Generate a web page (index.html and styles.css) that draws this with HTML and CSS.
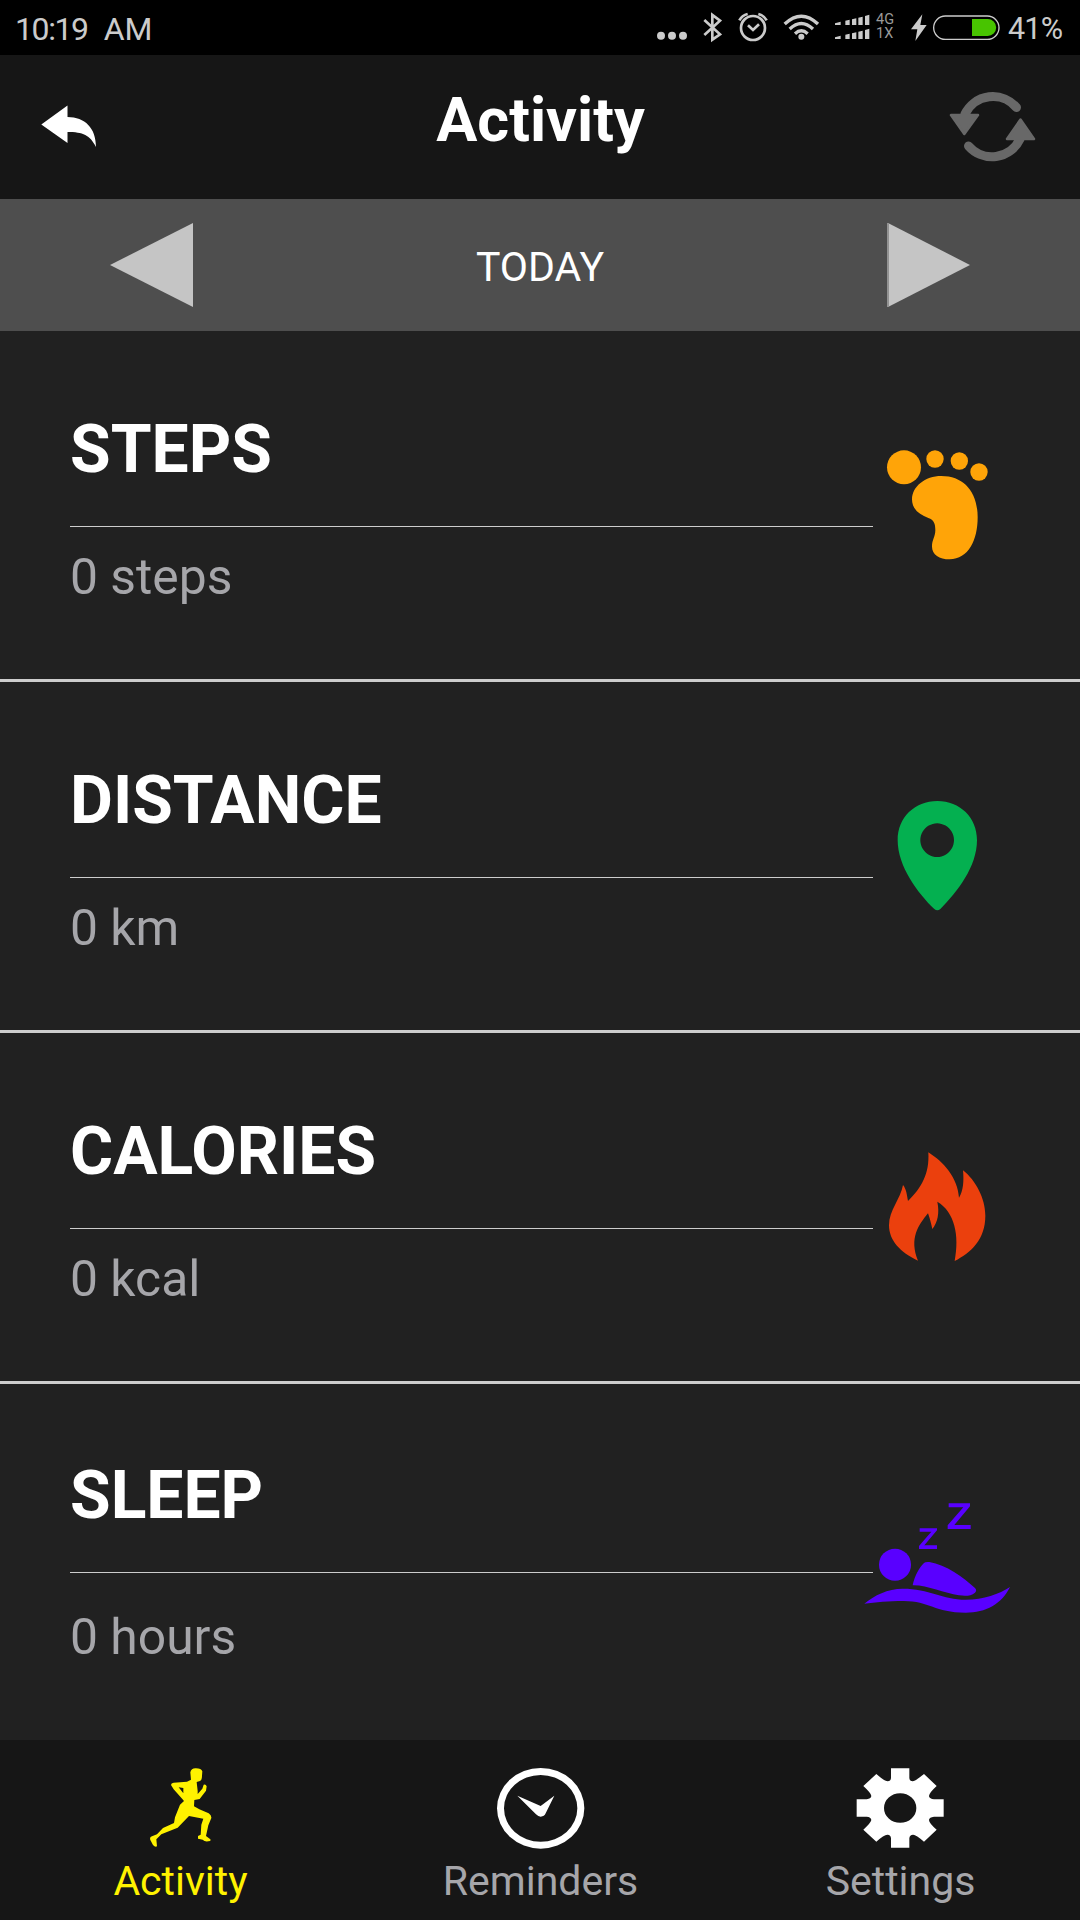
FILE: index.html
```html
<!DOCTYPE html>
<html lang="en">
<head>
<meta charset="utf-8">
<title>Activity</title>
<link rel="stylesheet" href="styles.css">
</head>
<body>
<div class="status">
  <div class="clock"><span>10:19</span><span>AM</span></div>
  <div class="tray">
    <svg width="39" height="55" viewBox="48 0 117 165"><circle cx="63" cy="107" r="12"/><circle cx="96" cy="107" r="12"/><circle cx="129" cy="107" r="12"/></svg>
    <svg width="35" height="55" viewBox="165 0 105 165"><path class="line" d="M193 60 240 103 217 119V45L240 62 193 105" stroke-width="8"/></svg>
    <svg width="46" height="55" viewBox="270 0 138 165"><g class="line"><circle cx="339" cy="84" r="36" stroke-width="8"/><path d="M324 76 339 90 357 73" stroke-width="8"/><path d="M298 61Q306 46 323 42M355 42Q372 46 380 61" stroke-width="8"/></g></svg>
    <svg width="51" height="55" viewBox="408 0 153 165"><g class="line" stroke-width="10"><path d="M434 72Q484 25 534 72M449 87Q484 54 519 87M465 101Q484 84 503 101"/></g><circle cx="484" cy="110" r="9"/></svg>
    <svg width="46" height="55" viewBox="561 0 138 165"><path d="M585 70 602 65V75H585ZM616 62 629 59V75H616ZM636 58 649 55V75H636ZM655 53 668 50V75H655ZM675 48 688 44V75H675Z"/><path d="M585 112 602 107V117H585ZM616 104 629 101V117H616ZM636 100 649 97V117H636ZM655 95 668 92V117H655ZM675 90 688 86V117H675Z"/></svg>
    <div class="network"><span>4G</span><span>1X</span></div>
    <svg width="23" height="55" viewBox="801 0 69 165"><path d="M847 43 813 88H832L826 123 860 75H841Z"/></svg>
    <svg width="74" height="55" viewBox="870 0 222 165"><rect class="line" x="881" y="48" width="196" height="70" rx="35" stroke-width="4"/><path class="charge" d="M996 57H1043A25.500 25.500 0 0 1 1043 108H996Z"/></svg>
    <span class="percent">41%</span>
  </div>
</div>

<header class="header">
  <svg class="back" width="60" height="46" viewBox="40 103 60 46"><path d="M41.300 124.500 67.500 105.500V117C85 117 96 128 96 147C90 135 83 132 67.500 132V143Z"/></svg>
  <h1>Activity</h1>
  <svg class="sync" width="90" height="72" viewBox="948 90 90 72"><path class="ring" d="M965 114A31 31 0 0 1 1016.500 107.500M968.500 146A31 31 0 0 0 1020 139"/><path class="heads" d="M951 115H978L964.300 134ZM1020.500 119.500 1034 139H1007Z"/></svg>
</header>

<div class="datebar">
  <svg width="83" height="84" viewBox="0 0 83 84"><path d="M0 42 83 0V84Z"/></svg>
  <span>TODAY</span>
  <svg width="83" height="84" viewBox="0 0 83 84"><path d="M1 0 83 42 1 84Z"/><path class="edge" d="M0 0H2V84H0Z"/></svg>
</div>

<main>
  <section class="row steps">
    <div class="info"><h2>STEPS</h2><p>0 steps</p></div>
    <svg width="150" height="150" viewBox="0 0 450 450"><circle cx="132" cy="112" r="51"/><circle cx="225" cy="87" r="26"/><circle cx="298" cy="93" r="26"/><circle cx="357" cy="126" r="26"/><path d="M244 138C195 138 156 170 156 208C156 237 177 253 205 264C222 270 226 281 226 301C226 320 216 330 216 350C216 373 238 388 269 388C325 388 353 330 353 262C353 186 312 138 244 138Z"/></svg>
  </section>
  <section class="row distance">
    <div class="info"><h2>DISTANCE</h2><p>0 km</p></div>
    <svg width="140" height="150" viewBox="0 0 420 450"><path fill-rule="evenodd" d="M202 63C134 63 83 113 83 180C83 260 144 340 193 387Q202 395 211 387C262 336 321 260 321 180C321 113 270 63 202 63ZM201.500 130A50.500 50.500 0 1 1 201.400 130Z"/></svg>
  </section>
  <section class="row calories">
    <div class="info"><h2>CALORIES</h2><p>0 kcal</p></div>
    <svg width="150" height="150" viewBox="0 0 450 450"><path d="M205 67C251 96 293 143 297 203C310 183 312 153 309 121C347 151 376 205 376 257C376 328 334 367 284 393C299 316 284 246 232 215C239 249 233 277 217 297C213 280 210 266 204 250C175 286 147 325 174 392C120 367 87 331 87 286C87 240 122 207 129 165C139 177 141 196 144 213C184 174 209 132 205 67Z"/></svg>
  </section>
  <section class="row sleep">
    <div class="info"><h2>SLEEP</h2><p>0 hours</p></div>
    <svg width="180" height="150" viewBox="0 0 540 450"><circle cx="135" cy="254" r="48"/><path d="M188 316C194 286 209 261 222 249Q226 245 238 246C288 254 340 292 375 324Q382 331 375 338C363 348 347 349 327 346C282 340 232 315 188 316ZM43 371C73 346 113 326 158 326C238 326 277 359 347 359C401 359 448 342 480 321C455 372 408 398 347 398C252 398 238 362 158 363C118 363 76 367 43 371Z"/><path d="M209 145H261V151L223 196H261V207H207V198L244 155H209ZM296 70H360V79L313 135H362V147H293V136L340 82H296Z"/></svg>
  </section>
</main>

<nav class="tabs">
  <a class="tab active">
    <svg width="120" height="96" viewBox="120 90 360 288"><path fill-rule="evenodd" d="M331 127Q334 114 348 115Q364 115 367 124L366 138Q366 151 360 153L350 156L353 183V192L367 176L371 164Q377 161 380 169L378 182L359 207L343 210L342 229L358 238L386 250Q395 256 394 264L385 286L378 318L391 328Q394 334 385 334Q374 336 368 329L354 326V318L362 314L364 284L370 266L327 258L293 293L244 313L229 328L231 349Q225 352 219 345L211 330Q208 320 216 319L231 313L249 294L282 279L285 262L300 224L312 213L307 207L281 178L273 165Q273 159 281 158L321 155L333 149ZM296 172 310 190V174Z"/></svg>
    <span>Activity</span>
  </a>
  <a class="tab">
    <svg width="120" height="96" viewBox="180 90 360 288"><path fill-rule="evenodd" d="M231 235A131 121 0 1 1 493 235A131 121 0 1 1 231 235ZM252 235A110 100 0 1 0 472 235A110 100 0 1 0 252 235Z"/><path d="M292 197 362 228 403 197 377 250Q373 260 362 260Q355 260 348 253Z"/></svg>
    <span>Reminders</span>
  </a>
  <a class="tab">
    <svg width="120" height="96" viewBox="120 90 360 288"><path fill-rule="evenodd" d="M273 115H328V144Q329 154 338 154Q346 153 372 132L410 168Q386 190 387 199Q389 207 402 208H431V260H402Q388 262 387 269Q386 278 410 299L372 335Q347 313 339 314Q329 314 328 325V353H273V325Q272 314 263 314Q253 313 229 335L190 299Q213 278 214 270Q213 261 200 260H170V208H200Q213 206 214 198Q214 190 190 168L229 132Q254 154 263 154Q272 154 273 144ZM252 234A48.500 44.500 0 1 0 349 234A48.500 44.500 0 1 0 252 234Z"/></svg>
    <span>Settings</span>
  </a>
</nav>
</body>
</html>
```
FILE: styles.css
```css
* { box-sizing: border-box; }

body {
  margin: 0;
  width: 1080px;
  height: 1920px;
  display: flex;
  flex-direction: column;
  overflow: hidden;
  background: #212121;
  color: #fff;
  font-family: Roboto, "Noto Sans", sans-serif;
}

h1, h2, p { margin: 0; }

svg {
  display: block;
  flex: none;
  fill: currentColor;
}

/* Status bar */
.status {
  height: 55px;
  flex: none;
  display: flex;
  justify-content: space-between;
  padding: 0 16px 0 15px;
  background: #000;
  color: #cbcbcb;
}

.clock {
  display: flex;
  gap: 16px;
  font-size: 32px;
  line-height: 58px;
}

.clock span:first-child { letter-spacing: -1.4px; }

.tray { display: flex; }

.line {
  fill: none;
  stroke: currentColor;
}

.charge { fill: #48c400; }

.network {
  width: 34px;
  display: flex;
  flex-direction: column;
  padding: 13px 0 0 3px;
  font-size: 14.500px;
  line-height: 14px;
  color: #9a9a9a;
}

.percent {
  width: 60px;
  padding-left: 4px;
  font-size: 30.500px;
  line-height: 57px;
  letter-spacing: -0.8px;
}

/* Title bar */
.header {
  height: 144px;
  flex: none;
  display: grid;
  grid-template-columns: 1fr auto 1fr;
  background: #161616;
}

.header h1 {
  padding: 28px 0 0 1px;
  font-size: 61.200px;
  line-height: 74px;
  font-weight: 700;
}

.back { margin: 48px 0 0 40px; }

.sync {
  justify-self: end;
  margin: 35px 42px 0 0;
  color: #686868;
}

.ring {
  fill: none;
  stroke: currentColor;
  stroke-width: 9;
  stroke-linecap: round;
}

.heads {
  stroke: currentColor;
  stroke-width: 2.500;
  stroke-linejoin: round;
}

/* Date switcher */
.datebar {
  height: 132px;
  flex: none;
  display: flex;
  justify-content: space-between;
  padding: 24px 110px 0;
  background: #4e4e4e;
}

.datebar svg { color: #c5c5c5; }

.datebar .edge { fill: #939393; }

.datebar span {
  padding-top: 20px;
  font-size: 41px;
  line-height: 48px;
}

/* Metric rows */
.row {
  height: 351px;
  display: flex;
  padding-left: 70px;
  border-bottom: 3px solid #cdcdcd;
}

.info {
  width: 803px;
  flex: none;
  padding-top: 80px;
}

.info h2 {
  height: 116px;
  border-bottom: 1px solid #cdcdcd;
  font-size: 66px;
  line-height: 78px;
  font-weight: 700;
}

.info p {
  margin-top: 20px;
  font-size: 49.800px;
  line-height: 60px;
  color: #a6a6aa;
}

.steps svg { margin: 99px 0 0 -13px; color: #ffa408; }
.distance svg { margin: 98px 0 0 -3px; color: #04b050; }
.calories svg { margin: 97px 0 0 -13px; color: #eb400d; }
.sleep svg { margin: 96px 0 0 -23px; color: #5900ff; }

.sleep {
  height: 356px;
  border-bottom: 0;
}

.sleep .info { padding-top: 73px; }
.sleep p { margin-top: 34px; }

/* Bottom tabs */
.tabs {
  height: 180px;
  flex: none;
  display: grid;
  grid-template-columns: repeat(3, 1fr);
  background: #161616;
}

.tab {
  display: flex;
  flex-direction: column;
  align-items: center;
  padding-top: 20px;
  color: #fff;
}

.tab span {
  margin-top: 1px;
  padding-left: 1px;
  font-size: 41px;
  line-height: 48px;
  color: #a6a6aa;
}

.tab.active,
.tab.active span { color: #fff200; }
```
